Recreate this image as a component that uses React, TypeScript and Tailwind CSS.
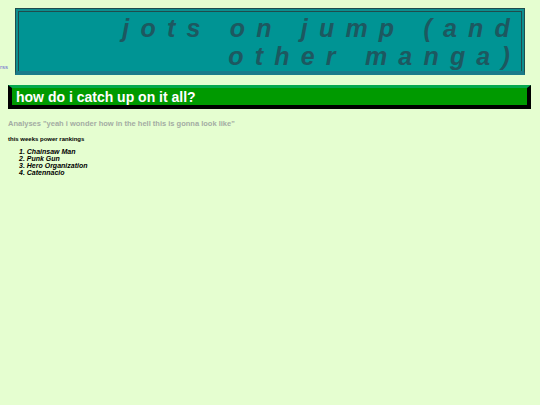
import React from "react";

export default function App() {
  const items = ["Chainsaw Man", "Punk Gun", "Hero Organization", "Catennacio"];
  return (
    <div className="min-h-[405px] w-full bg-[#e5fed0] font-['Liberation_Sans',Arial,sans-serif] pt-[8px]">
      <div className="flex items-end">
        <span className="w-[15px] text-[6px] leading-[6px] text-[#6a6ad0] mb-[5px]">rss</span>
        <div className="w-[510px] h-[67px] border border-[#1f4c4c] border-b-[4px] border-b-[#1a7b8a] bg-[#0e8e8e] p-[2px] pb-0">
          <div className="h-full border border-[#1f4c4c] border-b-0 bg-[#009494] text-right pr-0 pt-[2px]">
            <div className="text-[25px] leading-[28px] font-bold italic tracking-[11.2px] text-[#1d5860]">
              jots on jump (and
            </div>
            <div className="text-[25px] leading-[28px] font-bold italic tracking-[11.2px] text-[#1d5860]">
              other manga)
            </div>
          </div>
        </div>
      </div>

      <div className="mx-[8px] mt-[10px] h-[24px] w-[523px] border-l-[4px] border-r-[4px] border-b-[4px] border-t-[3px] border-l-black border-r-black border-b-black border-t-[#05a84e] bg-[#009a00] pl-[4px] flex items-center">
        <span className="text-white font-bold text-[14px] leading-[16px]">how do i catch up on it all?</span>
      </div>

      <div className="pl-[8px] mt-[9px] text-[7.5px] leading-[12px] font-bold text-[#a3aca3]">
        Analyses "yeah i wonder how in the hell this is gonna look like"
      </div>

      <div className="pl-[8px] mt-[5px] text-[6px] leading-[9px] font-bold text-black">
        this weeks power rankings
      </div>

      <ol className="pl-[19px] mt-[4px] text-[7px] leading-[7px] font-bold italic text-black">
        {items.map((it, i) => (
          <li key={it}>
            {i + 1}. {it}
          </li>
        ))}
      </ol>
    </div>
  );
}
